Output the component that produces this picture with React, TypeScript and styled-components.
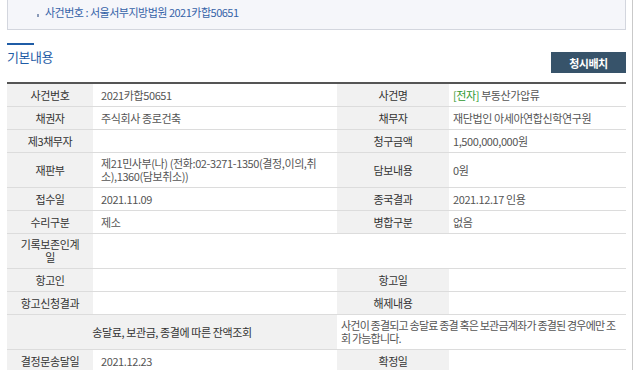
import React from "react";
import styled, { createGlobalStyle } from "styled-components";

const GlobalStyle = createGlobalStyle`
  html, body {
    margin: 0;
    padding: 0;
    background: #fff;
  }
  body {
    font-family: "Noto Sans CJK KR", "Noto Sans", sans-serif;
    color: #555;
  }
`;

const Page = styled.div`
  width: 619px;
  height: 370px;
  padding: 0 6px 0 7px;
  border-right: 1px solid #c9c9c9;
`;

const CaseBox = styled.div`
  height: 30px;
  box-sizing: border-box;
  background: #f5f6fa;
  border: 1px solid #d3d6de;
  border-top: none;
  display: flex;
  align-items: center;
  padding: 0 0 5px 29px;
  font-size: 11px;
  letter-spacing: -0.5px;
  color: #3563a8;
`;

const Bullet = styled.span`
  display: inline-block;
  width: 2px;
  height: 3px;
  background: #8a9ab8;
  margin: 6px 6px 0 0;
`;

const HeaderRow = styled.div`
  margin-top: 13px;
  height: 30px;
  display: flex;
  justify-content: space-between;
  align-items: flex-end;
`;

const SectionTitle = styled.h3`
  margin: 0;
  align-self: flex-start;
  font-size: 13px;
  font-weight: 400;
  line-height: 20px;
  color: #1f5ca6;
  letter-spacing: -0.5px;
  &::before {
    content: "";
    display: block;
    width: 27px;
    height: 2px;
    background: #1f5ca6;
    margin-bottom: 2px;
  }
`;

const DarkButton = styled.button`
  width: 75px;
  height: 21px;
  border: none;
  background: #37536a;
  color: #fff;
  font-family: inherit;
  font-size: 11px;
  font-weight: 700;
  letter-spacing: -0.5px;
  padding: 0;
  cursor: pointer;
`;

const InfoTable = styled.table`
  margin-top: 9px;
  width: 619px;
  table-layout: fixed;
  border-collapse: collapse;
  border-top: 2px solid #555;
  font-size: 11px;
  line-height: 13px;
  letter-spacing: -0.4px;
`;

const Label = styled.th`
  background: #f1f1f1;
  color: #333;
  font-weight: 400;
  text-align: center;
  padding: 4px 10px;
  border-bottom: 1px solid #dcdcdc;
  height: 14px;
  word-break: break-all;
`;

const Value = styled.td<{ $tight?: boolean; $dense?: boolean }>`
  color: #555;
  padding: ${(p) => (p.$tight ? "4px 4px" : "4px 8px")};
  border-bottom: 1px solid #dcdcdc;
  word-break: break-all;
  letter-spacing: ${(p) => (p.$dense ? "-0.8px" : "-0.4px")};
  height: 14px;
`;

const Tag = styled.span`
  color: #2f9a2f;
`;

export default function App() {
  return (
    <Page>
      <GlobalStyle />
      <CaseBox>
        <Bullet />
        사건번호 : 서울서부지방법원 2021카합50651
      </CaseBox>
      <HeaderRow>
        <SectionTitle>기본내용</SectionTitle>
        <DarkButton>청시배치</DarkButton>
      </HeaderRow>
      <InfoTable>
        <colgroup>
          <col style={{ width: 86 }} />
          <col style={{ width: 244 }} />
          <col style={{ width: 112 }} />
          <col style={{ width: 177 }} />
        </colgroup>
        <tbody>
          <tr>
            <Label>사건번호</Label>
            <Value>2021카합50651</Value>
            <Label>사건명</Label>
            <Value $tight>
              <Tag>[전자]</Tag> 부동산가압류
            </Value>
          </tr>
          <tr>
            <Label>채권자</Label>
            <Value>주식회사 종로건축</Value>
            <Label>채무자</Label>
            <Value $tight>재단법인 아세아연합신학연구원</Value>
          </tr>
          <tr>
            <Label>제3채무자</Label>
            <Value></Value>
            <Label>청구금액</Label>
            <Value $tight>1,500,000,000원</Value>
          </tr>
          <tr>
            <Label>재판부</Label>
            <Value>제21민사부(나) (전화:02-3271-1350(결정,이의,취소),1360(담보취소))</Value>
            <Label>담보내용</Label>
            <Value $tight>0원</Value>
          </tr>
          <tr>
            <Label>접수일</Label>
            <Value>2021.11.09</Value>
            <Label>종국결과</Label>
            <Value $tight>2021.12.17 인용</Value>
          </tr>
          <tr>
            <Label>수리구분</Label>
            <Value>제소</Value>
            <Label>병합구분</Label>
            <Value $tight>없음</Value>
          </tr>
          <tr>
            <Label>기록보존인계일</Label>
            <Value colSpan={3}></Value>
          </tr>
          <tr>
            <Label>항고인</Label>
            <Value></Value>
            <Label>항고일</Label>
            <Value $tight></Value>
          </tr>
          <tr>
            <Label>항고신청결과</Label>
            <Value></Value>
            <Label>해제내용</Label>
            <Value $tight></Value>
          </tr>
          <tr>
            <Label colSpan={2}>송달료, 보관금, 종결에 따른 잔액조회</Label>
            <Value colSpan={2} $tight $dense>
              사건이 종결되고 송달료 종결 혹은 보관금계좌가 종결된 경우에만 조회 가능합니다.
            </Value>
          </tr>
          <tr>
            <Label>결정문송달일</Label>
            <Value>2021.12.23</Value>
            <Label>확정일</Label>
            <Value $tight></Value>
          </tr>
        </tbody>
      </InfoTable>
    </Page>
  );
}
